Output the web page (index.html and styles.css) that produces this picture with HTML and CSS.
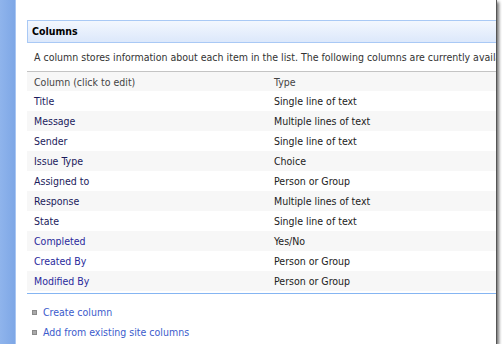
FILE: index.html
```html
<!DOCTYPE html>
<html lang="en">
<head>
    <meta charset="UTF-8">
    <title>Columns</title>
    <link rel="stylesheet" href="styles.css">
</head>
<body>
    <div class="frame">
        <div class="sidebar"></div>
        <div class="page">
            <!-- Columns section -->
            <div class="section-title">Columns</div>
            <div class="description">A column stores information about each item in the list. The following columns are currently available in this list:</div>

            <table class="columns">
                <tr class="head">
                    <td class="name">Column (click to edit)</td>
                    <td>Type</td>
                </tr>
                <tr><td class="name visited">Title</td><td>Single line of text</td></tr>
                <tr><td class="name visited">Message</td><td>Multiple lines of text</td></tr>
                <tr><td class="name visited">Sender</td><td>Single line of text</td></tr>
                <tr><td class="name visited">Issue Type</td><td>Choice</td></tr>
                <tr><td class="name visited">Assigned to</td><td>Person or Group</td></tr>
                <tr><td class="name visited">Response</td><td>Multiple lines of text</td></tr>
                <tr><td class="name visited">State</td><td>Single line of text</td></tr>
                <tr><td class="name">Completed</td><td>Yes/No</td></tr>
                <tr><td class="name">Created By</td><td>Person or Group</td></tr>
                <tr><td class="name">Modified By</td><td>Person or Group</td></tr>
            </table>

            <div class="divider"></div>

            <ul class="actions">
                <li><span class="bullet"></span><a href="#">Create column</a></li>
                <li><span class="bullet"></span><a href="#">Add from existing site columns</a></li>
            </ul>
        </div>
    </div>
</body>
</html>
```

FILE: styles.css
```css
body {
    margin: 0;
    background-color: #fff;
    font-family: "DejaVu Sans Condensed", "DejaVu Sans", sans-serif;
    font-stretch: condensed;
    font-size: 10.5px;
    color: #222;
}
.frame {
    display: flex;
    width: 497px;
    height: 344px;
    overflow: hidden;
    border-right: 1px solid #555;
    box-sizing: border-box;
    box-shadow: 2px 2px 3px rgba(0, 0, 0, 0.55);
}
.sidebar {
    width: 15px;
    flex: none;
    background: linear-gradient(to right, #8fb4ec, #7ea7e6);
    border-right: 1px solid #a9c6f2;
}
.page {
    flex: 1;
    min-width: 0;
    padding: 20px 0 0 11px;
    background-color: #fff;
}
.section-title {
    height: 21px;
    line-height: 21px;
    padding-left: 4px;
    border: 1px solid #a9c9f5;
    border-right: none;
    background: linear-gradient(#f3f7fe, #dce8fb);
    font-weight: bold;
    color: #000;
    width: 600px;
}
.description {
    height: 28px;
    line-height: 28px;
    padding-left: 7px;
    white-space: nowrap;
    color: #333;
}
.columns {
    border-collapse: collapse;
    width: 500px;
}
.columns td {
    height: 20px;
    padding: 0 7px;
    white-space: nowrap;
}
.columns .name {
    width: 226px;
    color: #2a2a9c;
}
.columns .visited {
    color: #1b1b5c;
}
.columns .head td {
    background-color: #f0f0f0;
    border-top: 1px solid #c4c4c4;
    color: #444;
    height: 19px;
}
.columns tr:nth-child(odd) td {
    background-color: #f7f7f7;
}
.divider {
    border-top: 1px solid #85b5f2;
    margin-top: 2px;
}
.actions {
    list-style: none;
    margin: 8px 0 0;
    padding: 0;
}
.actions li {
    height: 20px;
    line-height: 20px;
    display: flex;
    align-items: center;
}
.bullet {
    width: 5px;
    height: 5px;
    margin: 0 6px 0 5px;
    background-color: #a8a8a8;
    border: 1px solid #8a8a8a;
    box-sizing: border-box;
}
.actions a {
    color: #3b5bcc;
    text-decoration: none;
}
```
